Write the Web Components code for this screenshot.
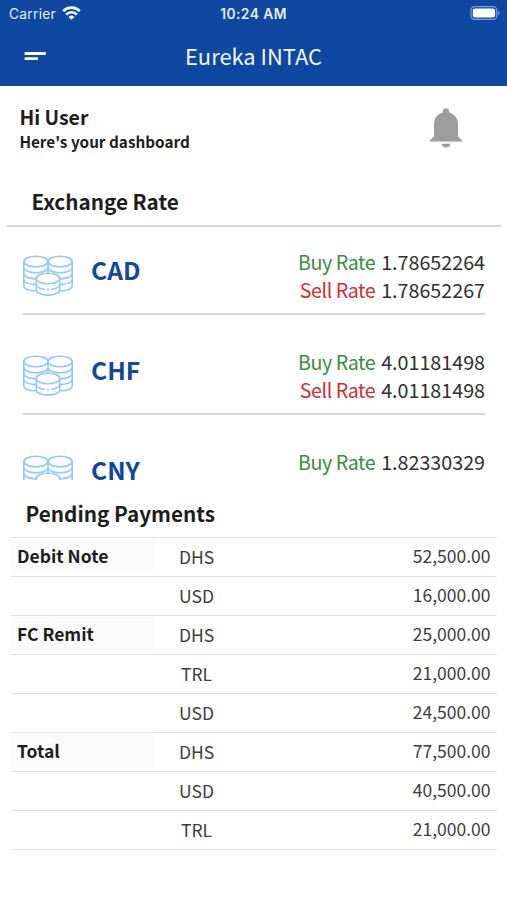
<!DOCTYPE html>
<html lang="en">
<head>
<meta charset="utf-8">
<title>Eureka INTAC</title>
<style>
html, body { margin: 0; background: #fff; }
body { font-family: "Noto Sans CJK SC", "Noto Sans", sans-serif; color: #1d1d1d; }
</style>
</head>
<body>
<dash-app></dash-app>
<script>
const define = (name, html) => customElements.define(name, class extends HTMLElement {
  connectedCallback() {
    if (this.shadowRoot) return;
    const root = this.attachShadow({ mode: "open" });
    const t = document.createElement("template");
    t.innerHTML = typeof html === "function" ? html(this) : html;
    root.append(t.content.cloneNode(true));
  }
});

define("status-bar", `<style>
:host { display: grid; grid-template-columns: 1fr auto 1fr; align-items: center; height: 28px; padding: 0 7px; color: #e6eefb; font: 13.8px/28px Inter, sans-serif; }
.left { display: flex; align-items: center; gap: 6px; letter-spacing: .25px; padding-left: 2px; }
.left svg { margin-top: -2px; }
.time { font-weight: 600; letter-spacing: .45px; }
.batt { justify-self: end; margin-top: -2px; }
svg { display: block; }
</style>
<div class="left"><span>Carrier</span><svg width="19" height="14" viewBox="0 0 19 14" fill="none" stroke="#fff" stroke-width="2.7"><path d="M1.2 5.100a11.800 11.800 0 0 1 16.600 0M4.100 8.500a7.600 7.600 0 0 1 10.800 0"/><path d="M9.5 13.8 6.500 10.900a4.300 4.300 0 0 1 6 0z" fill="#fff" stroke="none"/></svg></div>
<span class="time">10:24 AM</span>
<svg class="batt" width="30" height="14" viewBox="0 0 30 14"><rect x="1" y=".7" width="25.8" height="12.600" rx="3.600" fill="none" stroke="#7f9fd2" stroke-width="1.2"/><rect x="2.800" y="2.400" width="22.300" height="9.200" rx="2" fill="#fff"/><path d="M28.200 4.600q3 2.400 0 4.800z" fill="#7f9fd2"/></svg>`);

define("app-header", `<style>
:host { display: block; height: 86px; background: #0f47a1; color: #f1f6ff; }
.bar { display: grid; grid-template-columns: 46px 1fr 46px; align-items: center; height: 58px; }
svg { display: block; margin-left: 24px; margin-top: -2px; }
.title { text-align: center; font-size: 21.9px; line-height: 56px; height: 58px; }
</style>
<status-bar></status-bar>
<div class="bar"><svg width="22" height="10" viewBox="0 0 22 10" fill="#fff"><rect x=".6" y="1" width="21.2" height="3" rx=".5"/><rect x=".6" y="6.2" width="13.4" height="2.8" rx=".5"/></svg><div class="title"><slot></slot></div></div>`);

define("user-greeting", `<style>
:host { display: flex; justify-content: space-between; height: 95px; padding: 0 44px 0 19.4px; font-weight: 700; }
.text { padding-top: 19px; }
.hi { font-size: 19.5px; line-height: 24px; }
.sub { font-size: 15.3px; line-height: 24px; }
svg { display: block; margin-top: 21px; }
</style>
<div class="text"><div class="hi"><slot name="hi"></slot></div><div class="sub"><slot></slot></div></div>
<svg width="34" height="42" viewBox="0 0 34 42" fill="#9d9d9d"><path d="M17 1.200c-1.900 0-3.100 1.200-3.100 3v1.400C8.200 7 5 11.800 5 17.500v11.800L.8 33.400V34.600H33.200V33.400L29 29.300V17.500C29 11.800 25.800 7 20.100 5.600V4.200c0-1.800-1.200-3-3.100-3zM12.800 36.800h8.400a4.200 3.800 0 0 1-8.400 0z"/></svg>`);

define("coin-stack", `<style>
:host { display: block; width: 52px; height: 44px; }
svg { display: block; }
.b { fill: #fff; }
</style>
<svg width="52" height="44" viewBox="1 0 52 44" fill="none" stroke="#8fc9f8" stroke-width="1.6">
<path d="M1.800 7.500V32c0 2.800 5 4.700 12 4.700M50.200 7.500V32c0 2.800-5 4.700-12 4.700M26 7.500V23"/>
<ellipse cx="13.900" cy="7.500" rx="12" ry="5.200"/><ellipse cx="38.100" cy="7.500" rx="12" ry="5.200"/>
<path d="M1.800 13.500c0 3 5.300 5.200 12.100 5.200S26 16.500 26 13.500c0 3 5.400 5.200 12.200 5.200s12-2.200 12-5.200M1.800 19.500c0 3 5.300 5.200 12.100 5.200S26 22.500 26 19.500c0 3 5.400 5.200 12.200 5.200s12-2.200 12-5.200M1.800 25.500c0 3 5.300 5 12.100 5M50.200 25.500c0 3-5.300 5-12 5"/>
<path class="b" d="M14.200 24.500V35.700c0 3 5.200 5.400 11.800 5.400s11.800-2.400 11.800-5.400V24.500z"/>
<ellipse class="b" cx="26" cy="24.500" rx="11.800" ry="5.300"/>
<path d="M14.200 30c0 3 4 5 8.500 5.400M37.800 30c0 3-4 5-8.500 5.400M25 35.600h2"/>
</svg>`);

define("rate-row", el => `<style>
:host { display: block; box-sizing: border-box; height: 100px; padding: 0 22px 0 23px; }
.row { display: flex; height: 86px; }
coin-stack { margin-top: 27px; }
.code { margin-left: 16px; font-weight: 700; font-size: 24.600px; line-height: 36px; color: #0f47a1; padding-top: 24px; flex: 1; }
.rates { padding-top: 21px; font-size: 19.700px; line-height: 28px; color: #303030; white-space: nowrap; }
.rates div { display: flex; justify-content: flex-end; gap: 6px; }
.buy, .sell { letter-spacing: -.45px; }
.buy { color: #388e3c; } .sell { color: #cf2f33; }
hr { margin: 0; border: 0; height: 2px; background: #d8d8d8; }
</style>
<div class="row"><coin-stack></coin-stack><div class="code">${el.getAttribute("code")}</div>
<div class="rates"><div><span class="buy">Buy Rate</span><span>${el.getAttribute("buy")}</span></div>${el.hasAttribute("sell") ? `<div><span class="sell">Sell Rate</span><span>${el.getAttribute("sell")}</span></div>` : ""}</div></div>
<hr>`);

define("exchange-rates", `<style>
:host { display: block; height: 299px; }
h2 { margin: 0; height: 44px; padding-left: 31.500px; font-size: 20.700px; line-height: 41px; }
.line { margin: 0 6px 0 7px; height: 2px; background: #d8d8d8; }
.list { height: 253px; overflow: hidden; }
</style>
<h2>Exchange Rate</h2><div class="line"></div><div class="list"><slot></slot></div>`);

define("payment-row", el => `<style>
:host { display: grid; grid-template-columns: 143px 85px 1fr; box-sizing: border-box; height: 39px; border-bottom: 1px solid #e2e2e2; font-size: 17.500px; line-height: 36px; color: #3d3d3d; }
.name { font-weight: 700; color: #1d1d1d; padding-left: 6px; margin: 1px 0 3px; line-height: 34px; }
.name.on { background: #fafafa; }
.cur { text-align: center; padding-top: 1px; }
.amt { text-align: right; padding-right: 6.500px; }
</style>
<div class="name ${el.getAttribute("name") ? "on" : ""}">${el.getAttribute("name") || ""}</div><div class="cur">${el.getAttribute("cur")}</div><div class="amt">${el.getAttribute("amt")}</div>`);

define("pending-payments", `<style>
:host { display: block; }
h2 { margin: 0; height: 57px; padding-left: 25.500px; font-size: 20.700px; line-height: 66px; }
.table { margin: 0 10px 0 11px; border-top: 1px solid #e2e2e2; }
</style>
<h2>Pending Payments</h2><div class="table"><slot></slot></div>`);

define("dash-app", `<style>
:host { display: block; width: 507px; height: 900px; overflow: hidden; background: #fff; }
</style>
<app-header>Eureka INTAC</app-header>
<user-greeting><span slot="hi">Hi User</span>Here's your dashboard</user-greeting>
<exchange-rates>
<rate-row code="CAD" buy="1.78652264" sell="1.78652267"></rate-row>
<rate-row code="CHF" buy="4.01181498" sell="4.01181498"></rate-row>
<rate-row code="CNY" buy="1.82330329"></rate-row>
</exchange-rates>
<pending-payments>
<payment-row name="Debit Note" cur="DHS" amt="52,500.00"></payment-row>
<payment-row cur="USD" amt="16,000.00"></payment-row>
<payment-row name="FC Remit" cur="DHS" amt="25,000.00"></payment-row>
<payment-row cur="TRL" amt="21,000.00"></payment-row>
<payment-row cur="USD" amt="24,500.00"></payment-row>
<payment-row name="Total" cur="DHS" amt="77,500.00"></payment-row>
<payment-row cur="USD" amt="40,500.00"></payment-row>
<payment-row cur="TRL" amt="21,000.00"></payment-row>
</pending-payments>`);
</script>
</body>
</html>
